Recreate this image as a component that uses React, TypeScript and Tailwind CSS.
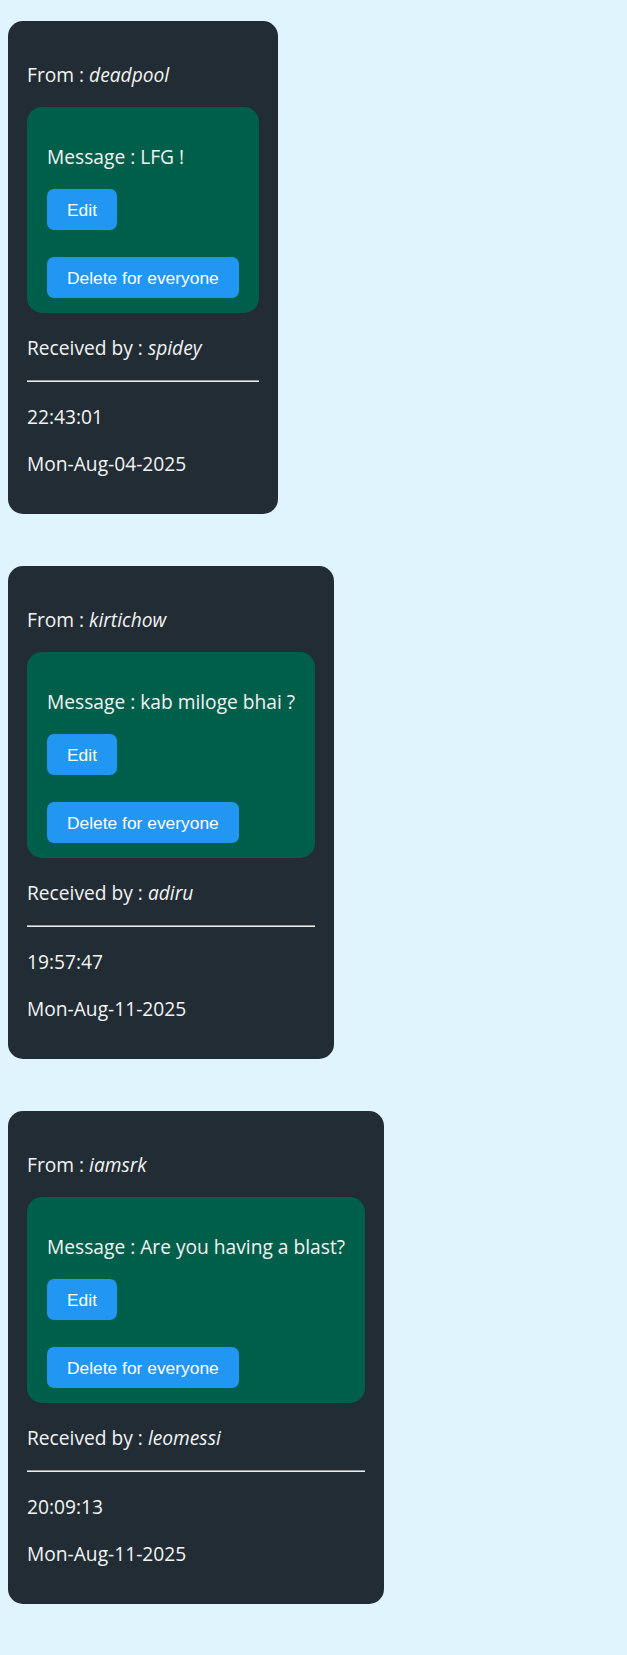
import React from 'react';

type Msg = {
  from: string;
  text: string;
  to: string;
  time: string;
  date: string;
};

const messages: Msg[] = [
  { from: 'deadpool', text: 'LFG !', to: 'spidey', time: '22:43:01', date: 'Mon-Aug-04-2025' },
  { from: 'kirtichow', text: 'kab miloge bhai ?', to: 'adiru', time: '19:57:47', date: 'Mon-Aug-11-2025' },
  { from: 'iamsrk', text: 'Are you having a blast?', to: 'leomessi', time: '20:09:13', date: 'Mon-Aug-11-2025' },
];

const MessageCard = ({ m }: { m: Msg }) => {
  return (
    <div className="w-fit rounded-[15px] bg-[#212c35] px-[19px] pt-[41px] pb-[37px] text-[19.2px] leading-[26px] text-[#f4f4f4]">
      <p>
        From : <i>{m.from}</i>
      </p>

      {/* message box */}
      <div className="mt-[19px] rounded-[15px] bg-[#005f4b] px-5 pt-[37px] pb-[15px]">
        <p>Message : {m.text}</p>
        <div className="mt-[19px] flex flex-col items-start gap-[27px] font-['Liberation_Sans',Arial,sans-serif] text-[17.4px]">
          <button className="h-[41px] rounded-[7px] bg-[#2196f3] px-5 text-white">Edit</button>
          <button className="h-[41px] rounded-[7px] bg-[#2196f3] px-5 text-white">Delete for everyone</button>
        </div>
      </div>

      <p className="mt-[22px]">
        Received by : <i>{m.to}</i>
      </p>
      <div className="mt-[19px] h-[2px] border-t border-t-[#9a9a9a] bg-[#ececec]" />
      <p className="mt-[22px]">{m.time}</p>
      <p className="mt-[21px]">{m.date}</p>
    </div>
  );
}

export default function App() {
  return (
    <div className="min-h-screen bg-[#dff4fd] font-['Open_Sans','Noto_Sans',sans-serif]">
      <div className="flex flex-col items-start gap-[52px] pl-2 pt-[21px] pb-[50px]">
        {messages.map((m, i) => (
          <MessageCard key={i} m={m} />
        ))}
      </div>
    </div>
  );
}
